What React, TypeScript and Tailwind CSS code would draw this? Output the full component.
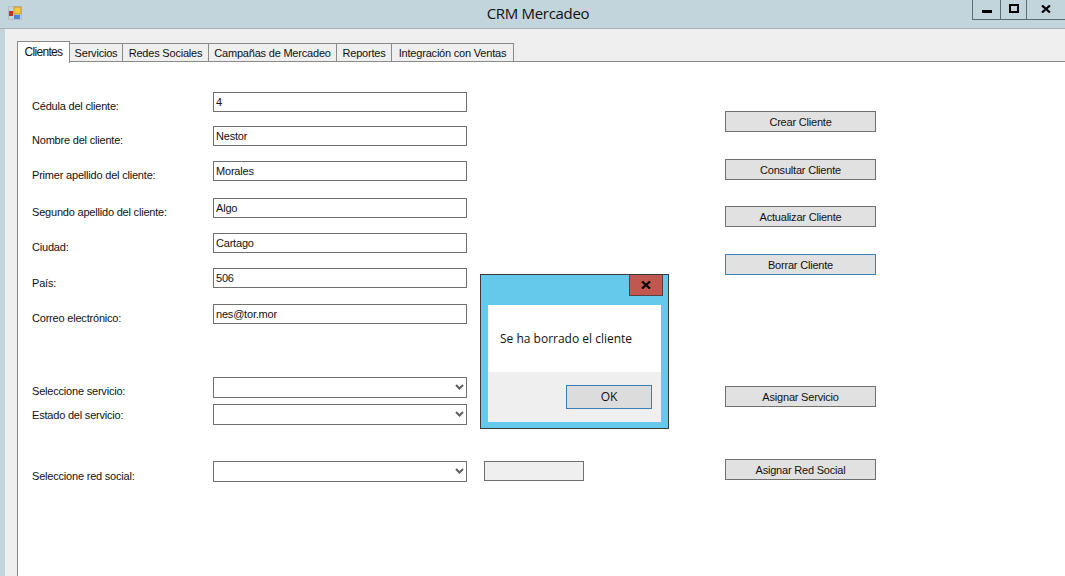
import React from "react";

const sans = "font-['Liberation_Sans',Arial,sans-serif]";

const fields = [
  { label: "Cédula del cliente:", value: "4", h: "mt-[30px]", lp: "pt-[7px]" },
  { label: "Nombre del cliente:", value: "Nestor", h: "mt-[14px]", lp: "pt-[7px]" },
  { label: "Primer apellido del cliente:", value: "Morales", h: "mt-[15px]", lp: "pt-[7px]" },
  { label: "Segundo apellido del cliente:", value: "Algo", h: "mt-[17px]", lp: "pt-[7px]" },
  { label: "Ciudad:", value: "Cartago", h: "mt-[15px]", lp: "pt-[7px]" },
  { label: "País:", value: "506", h: "mt-[15px]", lp: "pt-[8px]" },
  { label: "Correo electrónico:", value: "nes@tor.mor", h: "mt-[16px]", lp: "pt-[7px]" },
];

function Chevron() {
  return (
    <svg width="9" height="7" viewBox="0 0 9 7" className="absolute right-[2px] top-[6px]">
      <path d="M1 1 L4.5 4.5 L8 1" fill="none" stroke="#606060" strokeWidth="2" />
    </svg>
  );
}

function Combo({ label, className, lp }: { label: string; className: string; lp: string }) {
  return (
    <div className={`flex h-[21px] ${className}`}>
      <div className={`h-[21px] w-[181px] shrink-0 ${lp} leading-[14px] text-[#111]`}>{label}</div>
      <div className="relative h-[21px] w-[254px] border border-[#707070] bg-white">
        <Chevron />
      </div>
    </div>
  );
}

function Btn({ label, className, focus }: { label: string; className: string; focus?: boolean }) {
  return (
    <div
      className={`flex h-[21px] w-[151px] items-center justify-center border leading-[14px] text-[#111] bg-[#e1e1e1] ${
        focus ? "border-[#3c7fb1]" : "border-[#707070]"
      } ${className}`}
    >
      {label}
    </div>
  );
}

export default function App() {
  return (
    <div className={`relative h-[576px] w-[1065px] overflow-hidden bg-[#c3d5dc] ${sans}`}>
      {/* Title bar */}
      <div className="relative flex h-[29px] items-center justify-center border-b border-[#a9b0b6] pb-[2px] pl-[11px]">
        <svg width="15" height="15" viewBox="0 0 15 15" className="absolute left-[8px] top-[6px]">
          <rect x="0.5" y="0.5" width="13" height="13" fill="none" stroke="#b4bfc4" />
          <rect x="1" y="5" width="4" height="5" fill="#c8321e" />
          <rect x="6" y="1" width="7" height="7" fill="#f5c842" stroke="#b88a20" strokeWidth="0.7" />
          <rect x="6" y="9" width="6" height="4" fill="#4a86d8" />
        </svg>
        <span className="font-['Open_Sans',sans-serif] text-[15px] leading-[20px] tracking-[-0.3px] text-[#111]">
          CRM Mercadeo
        </span>
        <div className="absolute right-0 top-0 flex h-[20px] border-b border-l border-[#5f6a70]">
          <div className="flex w-[28px] items-end justify-center border-r border-[#5f6a70] pb-[6px]">
            <div className="h-[3px] w-[10px] bg-black" />
          </div>
          <div className="flex w-[26px] items-center justify-center border-r border-[#5f6a70] pb-[2px]">
            <div className="h-[9px] w-[10px] border-2 border-black" />
          </div>
          <div className="flex w-[38px] items-center justify-center pb-[2px]">
            <svg width="10" height="8" viewBox="0 0 10 8">
              <path d="M1 0.5 L9 7.5 M9 0.5 L1 7.5" stroke="#000" strokeWidth="2.2" />
            </svg>
          </div>
        </div>
      </div>

      {/* Client area */}
      <div className="ml-[5px] flex h-[547px] flex-col bg-[#efefef] pl-[12px] pt-[12px] text-[11px] tracking-[-0.2px]">
        {/* Tabs */}
        <div className="relative z-10 flex h-[20px] items-start leading-[14px] text-[#111]">
          <div className="flex h-[22px] w-[53px] shrink-0 items-start justify-center border border-b-0 border-[#8a8a8a] bg-white pt-[3px] text-[12px] tracking-[-0.7px]">
            Clientes
          </div>
          {[
            ["Servicios", "w-[53px]"],
            ["Redes Sociales", "w-[86px]"],
            ["Campañas de Mercadeo", "w-[128px]"],
            ["Reportes", "w-[55px]"],
            ["Integración con Ventas", "w-[122px]"],
          ].map(([t, w]) => (
            <div
              key={t}
              className={`mt-[2px] flex h-[18px] ${w} shrink-0 items-center justify-center whitespace-nowrap border border-b-0 border-l-0 border-[#8a8a8a] bg-[#efefef]`}
            >
              {t}
            </div>
          ))}
        </div>

        {/* Page */}
        <div className="flex flex-1 border-l border-t border-[#8a8a8a] bg-white pl-[14px]">
          {/* Form column */}
          <div className="w-[435px] shrink-0">
            {fields.map((f) => (
              <div key={f.label} className={`flex h-[20px] ${f.h}`}>
                <div className={`h-[20px] w-[181px] shrink-0 ${f.lp} leading-[14px] text-[#111]`}>{f.label}</div>
                <div className="flex h-[20px] w-[254px] items-center border border-[#707070] bg-white pl-[2px] leading-[14px] text-[#111]">
                  {f.value}
                </div>
              </div>
            ))}
            <Combo label="Seleccione servicio:" className="mt-[53px]" lp="pt-[7px]" />
            <Combo label="Estado del servicio:" className="mt-[6px]" lp="pt-[4px]" />
            <Combo label="Seleccione red social:" className="mt-[36px]" lp="pt-[8px]" />
          </div>

          {/* Middle column */}
          <div className="ml-[17px] w-[100px] shrink-0">
            <div className="mt-[399px] h-[20px] w-[100px] border border-[#707070] bg-[#efefef]" />
          </div>

          {/* Buttons column */}
          <div className="ml-[141px] flex flex-col">
            <Btn label="Crear Cliente" className="mt-[49px]" />
            <Btn label="Consultar Cliente" className="mt-[27px]" />
            <Btn label="Actualizar Cliente" className="mt-[26px]" />
            <Btn label="Borrar Cliente" className="mt-[27px]" focus />
            <Btn label="Asignar Servicio" className="mt-[111px]" />
            <Btn label="Asignar Red Social" className="mt-[52px]" />
          </div>
        </div>
      </div>

      {/* Message box */}
      <div className="absolute left-[480px] top-[274px] h-[155px] w-[189px] border border-[#3a3a3a] bg-[#65c9eb] font-['Open_Sans',sans-serif]">
        <div className="absolute right-[5px] top-0 flex h-[21px] w-[34px] items-center justify-center border border-t-0 border-[#5a4040] bg-[#c0584f]">
          <svg width="10" height="8" viewBox="0 0 10 8">
            <path d="M1 0.5 L9 7.5 M9 0.5 L1 7.5" stroke="#000" strokeWidth="2.2" />
          </svg>
        </div>
        <div className="absolute left-[7px] top-[30px] flex h-[117px] w-[173px] flex-col">
          <div className="flex h-[67px] items-center bg-white pl-[12px] text-[12px] leading-[16px] text-[#111]">
            Se ha borrado el cliente
          </div>
          <div className="flex flex-1 justify-end bg-[#efefef] pr-[9px] pt-[13px]">
            <div className="flex h-[24px] w-[86px] items-center justify-center border border-[#3c7fb1] bg-[#dcdcdc] text-[12px] text-[#111]">
              OK
            </div>
          </div>
        </div>
      </div>
    </div>
  );
}
